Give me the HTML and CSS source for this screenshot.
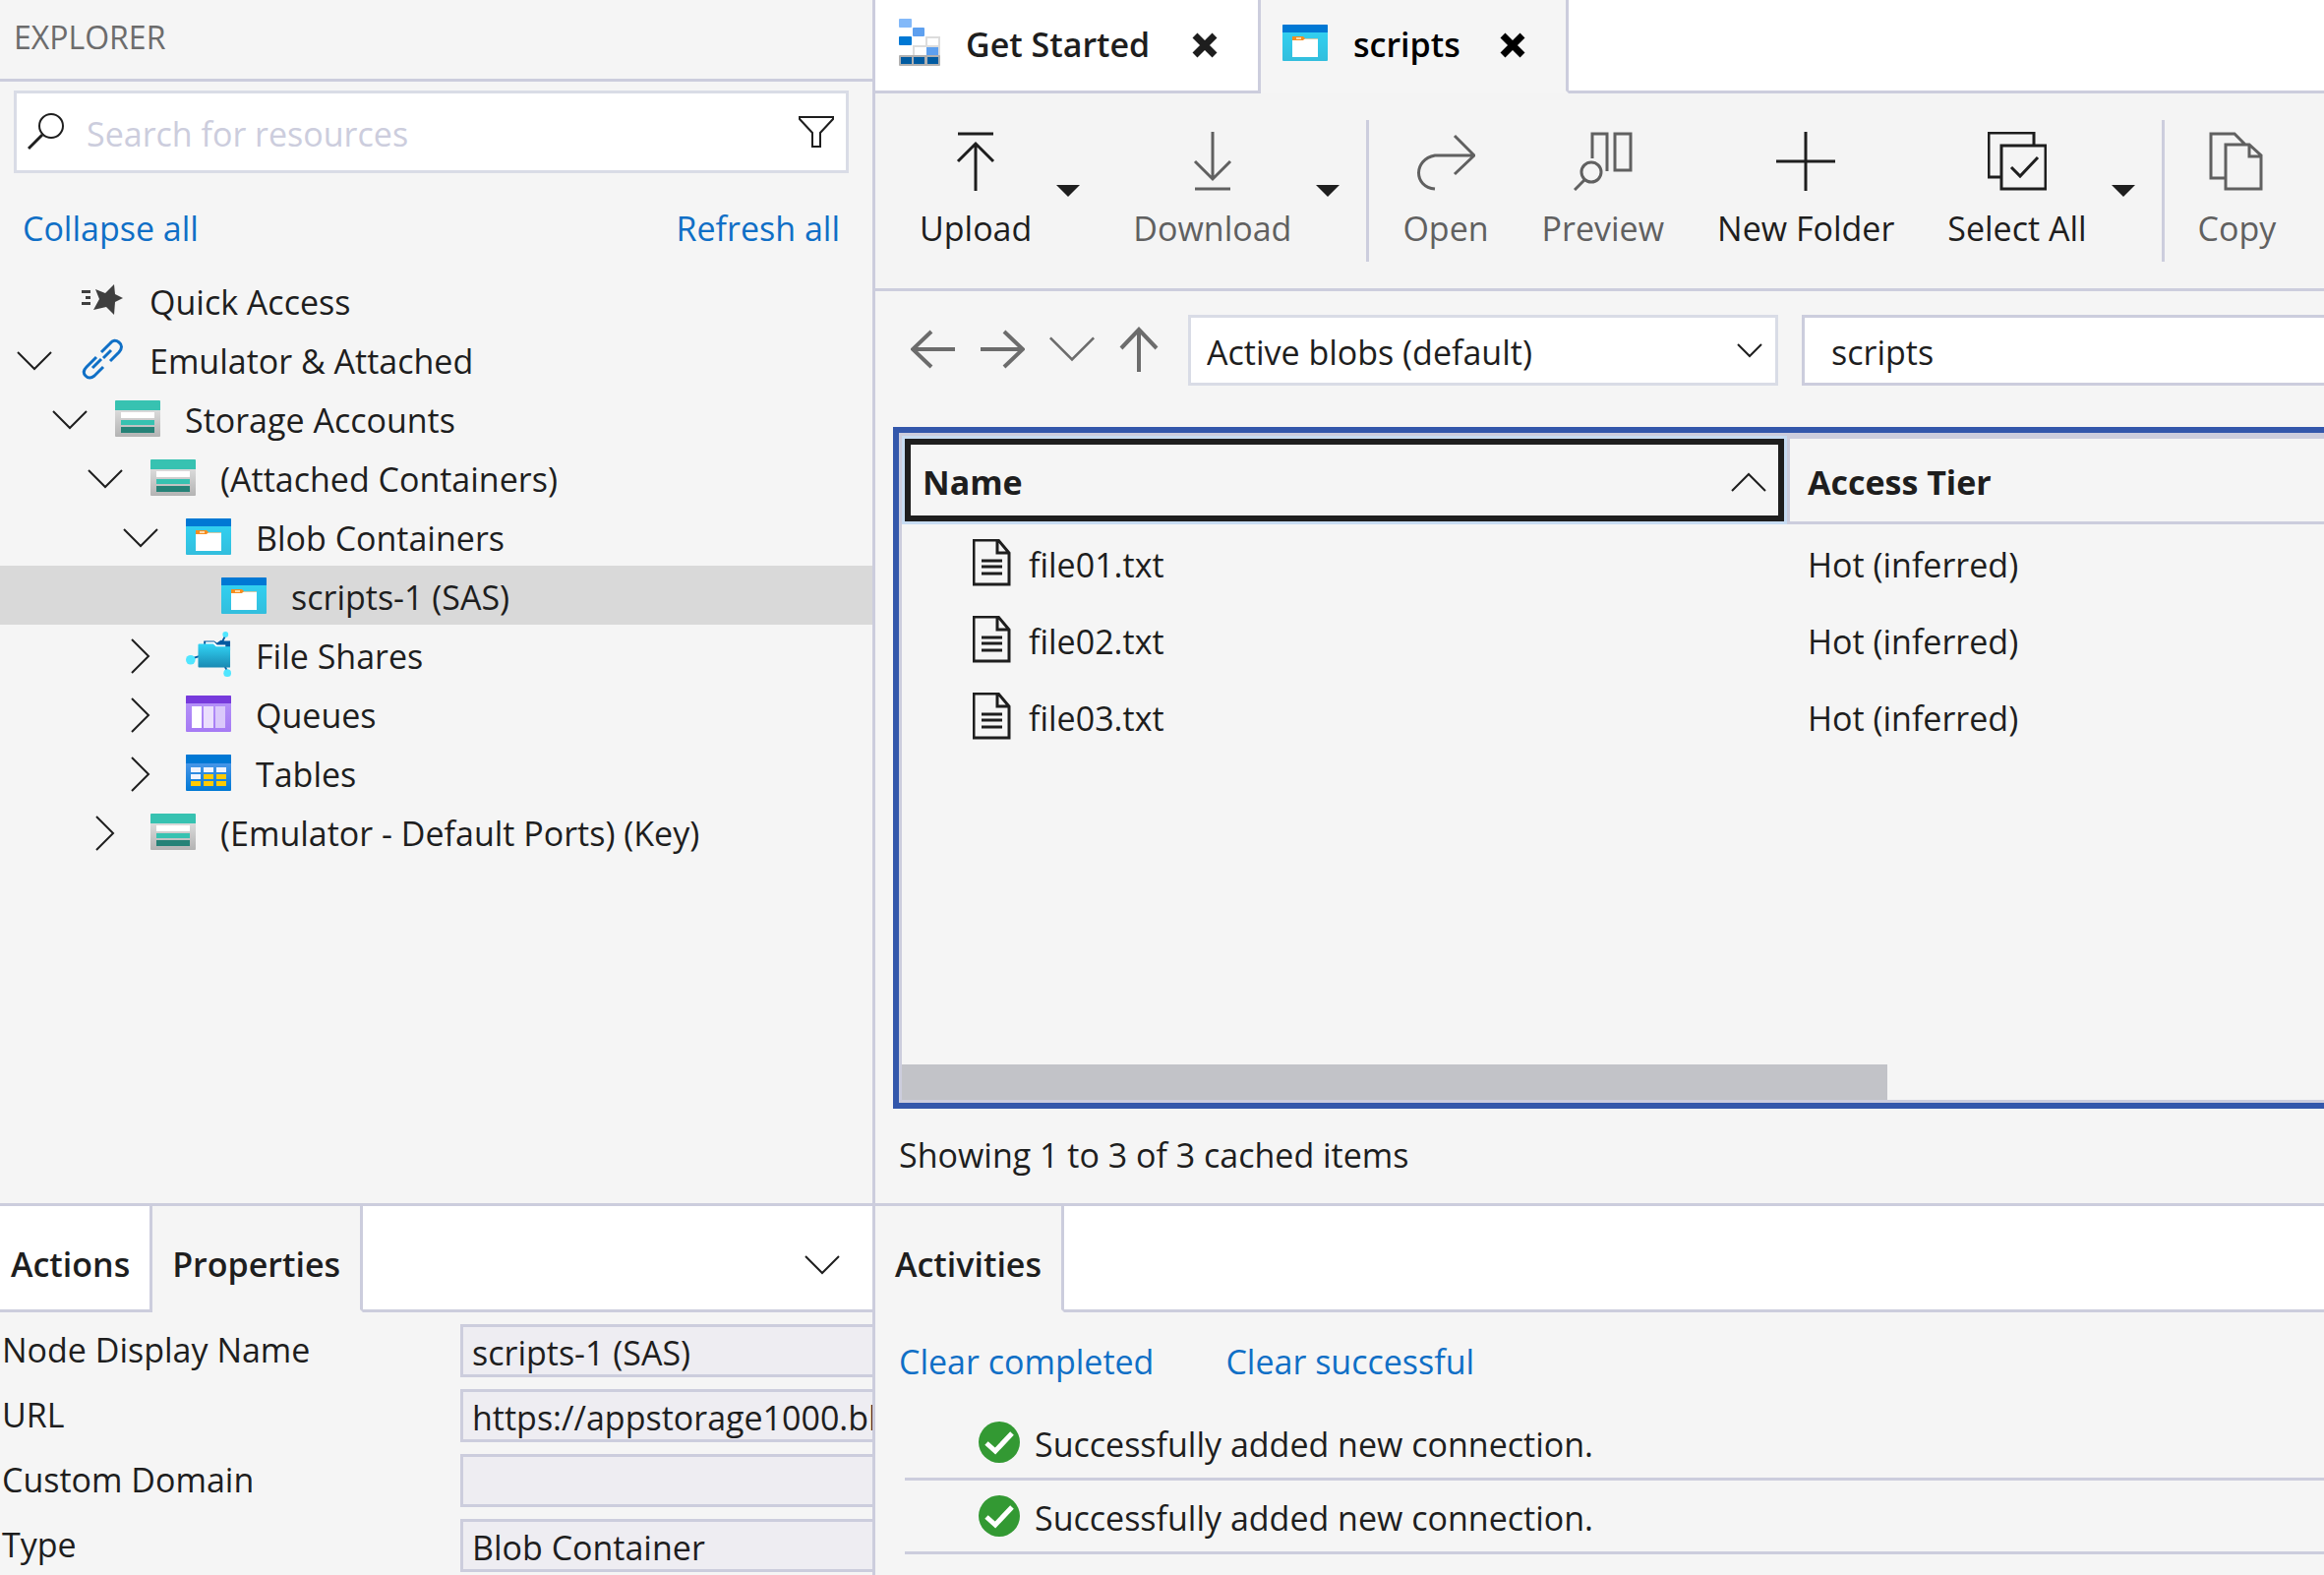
FILE: index.html
```html
<!DOCTYPE html>
<html lang="en">
<head>
  <meta charset="UTF-8" />
  <meta name="viewport" content="width=device-width, initial-scale=1" />
  <title>Storage Explorer</title>
  <link rel="stylesheet" href="styles.css">
</head>
<body>
  <!-- icon definitions -->
  <svg class="defs" width="0" height="0" aria-hidden="true">
    <defs>
      <linearGradient id="gray" x1="0" y1="0" x2="0" y2="1"><stop offset="0" stop-color="#e9e9e9"/><stop offset="1" stop-color="#b3b3b3"/></linearGradient>
      <linearGradient id="cyan" x1="0" y1="0" x2="0" y2="1"><stop offset="0" stop-color="#32d4f5"/><stop offset="1" stop-color="#32bedd"/></linearGradient>
      <linearGradient id="folder" x1="0" y1="0" x2="0" y2="1"><stop offset="0" stop-color="#32d4f5"/><stop offset="1" stop-color="#198ab3"/></linearGradient>
      <linearGradient id="purple" x1="0" y1="0" x2="0" y2="1"><stop offset="0" stop-color="#b796f9"/><stop offset="1" stop-color="#a67af4"/></linearGradient>
      <linearGradient id="blue" x1="0" y1="0" x2="0" y2="1"><stop offset="0" stop-color="#5ea0ef"/><stop offset="1" stop-color="#0078d4"/></linearGradient>
    </defs>
    <symbol id="i-down" viewBox="0 0 36 20"><path d="M1 1l17 17L35 1" fill="none" stroke="currentColor" stroke-width="2"/></symbol>
    <symbol id="i-right" viewBox="0 0 20 36"><path d="M1 1l17 17L1 35" fill="none" stroke="currentColor" stroke-width="2"/></symbol>
    <symbol id="i-storage" viewBox="0 0 46 37">
      <rect width="46" height="37" rx="1" fill="url(#gray)"/>
      <path d="M0 10V1q0-1 1-1h44q1 0 1 1v9z" fill="#37c2b1"/>
      <rect x="6" y="12" width="34" height="6" fill="#fff"/>
      <rect x="6" y="20" width="34" height="5" fill="#37c2b1"/>
      <rect x="6" y="27" width="34" height="6" fill="#258277"/>
    </symbol>
    <symbol id="i-blob" viewBox="0 0 46 37">
      <rect width="46" height="37" rx="1" fill="url(#cyan)"/>
      <path d="M0 8V1q0-1 1-1h44q1 0 1 1v7z" fill="#0078d4"/>
      <path d="M10 14h26v19H10z" fill="#fff"/>
      <path d="M22 14h14v1H22z" fill="#cfc9a8"/>
      <path d="M10 12h11l2 2-2 2H10z" fill="#f78d1e"/>
      <rect x="14" y="13" width="5" height="2" fill="#ffd9a8"/>
    </symbol>
    <symbol id="i-share" viewBox="0 0 48 50">
      <path d="M42 5l-4 8M5 30l10-3M44 44l-4-10" stroke="#005ba1" stroke-width="2"/>
      <path d="M19 11h11l3 2 4-3 4 1h6v10H19z" fill="#005ba1"/>
      <path d="M21 12h9l3 3h9v5H21z" fill="#fff"/>
      <path d="M13 15q0-1 1-1h15l3 3h15v22H14q-1 0-1-1z" fill="url(#folder)"/>
      <circle cx="42" cy="4" r="3" fill="#50e6ff"/><circle cx="5" cy="31" r="5" fill="#50e6ff"/><circle cx="44" cy="45" r="4" fill="#50e6ff"/>
    </symbol>
    <symbol id="i-queue" viewBox="0 0 46 37">
      <rect width="46" height="37" rx="1" fill="url(#purple)"/>
      <path d="M0 8V1q0-1 1-1h44q1 0 1 1v7z" fill="#773adc"/>
      <path d="M6 11h10v22H6z" fill="#fff"/><path d="M18 11h10v22H18z" fill="#ebdffd"/><path d="M30 11h10v22H30z" fill="#dac8fb"/>
    </symbol>
    <symbol id="i-table" viewBox="0 0 46 37">
      <rect width="46" height="37" rx="1" fill="url(#blue)"/>
      <path d="M0 9V1q0-1 1-1h44q1 0 1 1v8z" fill="#0078d4"/>
      <path d="M5 13h10v5H5zM18 13h10v5H18zM31 13h10v5H31zM5 20h10v5H5z" fill="#f0f4fd"/>
      <path d="M18 20h10v5H18zM31 20h10v5H31zM5 27h10v5H5zM18 27h10v5H18zM31 27h10v5H31z" fill="#ffca00"/>
    </symbol>
    <symbol id="i-star" viewBox="0 0 42 32">
      <path d="M0 6h9v3H0zM4 12h5v3H4zM0 18h9v3H0z" fill="#3f3f3f"/>
      <path d="M33 0l1 10 8 4-8 4-1 13-8-8-13 3 6-11-4-10 10 4z" fill="#3f3f3f"/>
    </symbol>
    <symbol id="i-link" viewBox="0 0 42 42">
      <g fill="none" stroke="#0f6fc6" stroke-width="3">
        <path d="M20 14l9-9q4-5 9-1t0 10L29 23"/>
        <path d="M15 19L5 29q-5 5-1 9t9 0l9-9"/>
        <path d="M11 30l9-9M22 20l8-8"/>
      </g>
    </symbol>
    <symbol id="i-start" viewBox="0 0 42 48">
      <rect width="13" height="9" rx="1" fill="#83b9f9"/>
      <rect x="14" y="9" width="12" height="9" rx="1" fill="#5ea0ef"/>
      <rect y="18" width="13" height="9" rx="1" fill="#0078d4"/>
      <path d="M15 18h12v9H15z" fill="#fff"/>
      <path d="M28 19h13v19H15V28h13z" fill="#fff" stroke="#dcdcdc" stroke-width="2"/>
      <path d="M27 28h14" stroke="#dcdcdc" stroke-width="2"/>
      <rect x="28" y="29" width="12" height="8" fill="#5ea0ef"/>
      <rect y="37" width="42" height="11" rx="1" fill="#b0b0b0"/>
      <path d="M2 39h11v7H2zM15 39h11v7H15zM29 39h11v7H29z" fill="#005ba1"/>
    </symbol>
    <symbol id="i-close" viewBox="0 0 26 26"><path d="M3 3l20 20M23 3L3 23" stroke="currentColor" stroke-width="7"/></symbol>
    <symbol id="i-file" viewBox="0 0 39 48">
      <path d="M1 1h25l11 13v32H1z M25 1v13h12" fill="none" stroke="currentColor" stroke-width="3"/>
      <path d="M9 22h21M9 28h21M9 35h21" stroke="currentColor" stroke-width="3"/>
    </symbol>
    <symbol id="i-ok" viewBox="0 0 42 42">
      <circle cx="21" cy="21" r="21" fill="#339933"/>
      <path d="M8 22l9 8L34 12" fill="none" stroke="#fff" stroke-width="5"/>
    </symbol>
    <symbol id="i-back" viewBox="0 0 46 40"><path d="M45 20H2M21 2L2 20l19 18" fill="none" stroke="currentColor" stroke-width="4"/></symbol>
    <symbol id="i-caret" viewBox="0 0 24 12"><path d="M0 0h24L12 12z" fill="currentColor"/></symbol>
  </svg>

  <div class="app">
    <aside class="side">
      <h2 class="side-title">EXPLORER</h2>

      <div class="side-body">
        <div class="search">
          <svg class="search-icon" viewBox="0 0 38 38"><circle cx="24" cy="13" r="12" fill="none" stroke="currentColor" stroke-width="2"/><path d="M15 22L1 36" stroke="currentColor" stroke-width="3"/></svg>
          <input type="text" placeholder="Search for resources" aria-label="Search for resources" />
          <button class="icon-btn" aria-label="Filter"><svg width="36" height="33" viewBox="0 0 36 33"><path d="M1 1h34v2L22 17v14h-8V17L1 3z" fill="none" stroke="currentColor" stroke-width="2"/></svg></button>
        </div>
        <div class="side-links">
          <a href="#">Collapse all</a>
          <a href="#">Refresh all</a>
        </div>

        <ul class="tree">
          <li class="node l0"><span class="arrow"></span><svg class="ico quick"><use href="#i-star"/></svg><span>Quick Access</span></li>
          <li class="node l0"><span class="arrow"><svg class="down"><use href="#i-down"/></svg></span><svg class="ico link"><use href="#i-link"/></svg><span>Emulator &amp; Attached</span></li>
          <li class="node l1"><span class="arrow"><svg class="down"><use href="#i-down"/></svg></span><svg class="ico"><use href="#i-storage"/></svg><span>Storage Accounts</span></li>
          <li class="node l2"><span class="arrow"><svg class="down"><use href="#i-down"/></svg></span><svg class="ico"><use href="#i-storage"/></svg><span>(Attached Containers)</span></li>
          <li class="node l3"><span class="arrow"><svg class="down"><use href="#i-down"/></svg></span><svg class="ico"><use href="#i-blob"/></svg><span>Blob Containers</span></li>
          <li class="node l4 selected"><span class="arrow"></span><svg class="ico"><use href="#i-blob"/></svg><span>scripts-1 (SAS)</span></li>
          <li class="node l3"><span class="arrow"><svg class="right"><use href="#i-right"/></svg></span><svg class="ico share"><use href="#i-share"/></svg><span>File Shares</span></li>
          <li class="node l3"><span class="arrow"><svg class="right"><use href="#i-right"/></svg></span><svg class="ico"><use href="#i-queue"/></svg><span>Queues</span></li>
          <li class="node l3"><span class="arrow"><svg class="right"><use href="#i-right"/></svg></span><svg class="ico"><use href="#i-table"/></svg><span>Tables</span></li>
          <li class="node l2"><span class="arrow"><svg class="right"><use href="#i-right"/></svg></span><svg class="ico"><use href="#i-storage"/></svg><span>(Emulator - Default Ports) (Key)</span></li>
        </ul>
      </div>

      <section class="bottom">
        <div class="tabs">
          <button class="tab first">Actions</button>
          <button class="tab active">Properties</button>
          <div class="tab-fill"><button class="icon-btn" aria-label="Collapse panel"><svg class="down"><use href="#i-down"/></svg></button></div>
        </div>
        <div class="props">
          <label for="p-name">Node Display Name</label><input id="p-name" type="text" value="scripts-1 (SAS)" readonly />
          <label for="p-url">URL</label><input id="p-url" type="text" value="https://appstorage1000.blob" readonly />
          <label for="p-domain">Custom Domain</label><input id="p-domain" type="text" value="" readonly />
          <label for="p-type">Type</label><input id="p-type" type="text" value="Blob Container" readonly />
        </div>
      </section>
    </aside>

    <main class="main">
      <div class="tabs editor-tabs">
        <div class="tab start"><svg width="42" height="48"><use href="#i-start"/></svg><span>Get Started</span><button class="icon-btn" aria-label="Close Get Started"><svg width="26" height="26"><use href="#i-close"/></svg></button></div>
        <div class="tab active file"><svg width="46" height="37"><use href="#i-blob"/></svg><span>scripts</span><button class="icon-btn" aria-label="Close scripts"><svg width="26" height="26"><use href="#i-close"/></svg></button></div>
        <div class="tab-fill"></div>
      </div>

      <div class="toolbar">
        <button class="tool split"><svg viewBox="0 0 60 60"><path d="M12 2h36M30 60V12M12 30l18-18 18 18" fill="none" stroke="currentColor" stroke-width="3"/></svg>Upload</button>
        <button class="more" aria-label="More upload options"><svg><use href="#i-caret"/></svg></button>
        <button class="tool split dim"><svg viewBox="0 0 60 60"><path d="M12 58h36M30 0v48M12 30l18 18 18-18" fill="none" stroke="currentColor" stroke-width="3"/></svg>Download</button>
        <button class="more" aria-label="More download options"><svg><use href="#i-caret"/></svg></button>
        <span class="sep"></span>
        <button class="tool dim"><svg viewBox="0 0 60 60"><path d="M39 4l20 20-20 19M59 24H19C-3 28-3 56 19 58" fill="none" stroke="currentColor" stroke-width="3"/></svg>Open</button>
        <button class="tool dim"><svg viewBox="0 0 60 60"><path d="M19 27V2h15v38M42 2h16v37H42z" fill="none" stroke="currentColor" stroke-width="3"/><circle cx="18" cy="41" r="10" fill="none" stroke="currentColor" stroke-width="3"/><path d="M11 49L1 59" stroke="currentColor" stroke-width="3"/></svg>Preview</button>
        <button class="tool"><svg viewBox="0 0 60 60"><path d="M0 30h60M30 0v60" stroke="currentColor" stroke-width="3"/></svg>New Folder</button>
        <button class="tool split"><svg viewBox="0 0 60 60"><path d="M14 46H1V1h46v13M14 14h45v44H14zM24 36l9 9 18-19" fill="none" stroke="currentColor" stroke-width="3"/></svg>Select All</button>
        <button class="more" aria-label="More select options"><svg><use href="#i-caret"/></svg></button>
        <span class="sep"></span>
        <button class="tool dim"><svg viewBox="0 0 60 60"><path d="M19 47H4V2h24l11 11M19 13h24l12 11v34H19zM43 13v12h12" fill="none" stroke="currentColor" stroke-width="3"/></svg>Copy</button>
      </div>

      <div class="content">
        <div class="nav">
          <button class="icon-btn" aria-label="Back"><svg width="46" height="40"><use href="#i-back"/></svg></button>
          <button class="icon-btn" aria-label="Forward"><svg class="flip" width="46" height="40"><use href="#i-back"/></svg></button>
          <button class="icon-btn" aria-label="History"><svg width="48" height="26"><use href="#i-down"/></svg></button>
          <button class="icon-btn" aria-label="Up"><svg width="40" height="46" viewBox="0 0 40 46"><path d="M20 46V2M2 22L20 3l18 19" fill="none" stroke="currentColor" stroke-width="4"/></svg></button>
          <div class="picker">
            <select aria-label="Blob view"><option>Active blobs (default)</option></select>
            <svg width="26" height="15" viewBox="0 0 26 15"><path d="M1 1l12 12L25 1" fill="none" stroke="currentColor" stroke-width="2"/></svg>
          </div>
          <input class="path" type="text" value="scripts" aria-label="Path" />
        </div>

        <div class="grid">
          <table>
            <thead>
              <tr>
                <th class="col-name"><button>Name<svg width="36" height="20" viewBox="0 0 36 20"><path d="M1 19L18 2l17 17" fill="none" stroke="currentColor" stroke-width="2"/></svg></button></th>
                <th class="col-tier">Access Tier</th>
              </tr>
            </thead>
            <tbody>
              <tr><td class="name"><svg><use href="#i-file"/></svg><span>file01.txt</span></td><td>Hot (inferred)</td></tr>
              <tr><td class="name"><svg><use href="#i-file"/></svg><span>file02.txt</span></td><td>Hot (inferred)</td></tr>
              <tr><td class="name"><svg><use href="#i-file"/></svg><span>file03.txt</span></td><td>Hot (inferred)</td></tr>
            </tbody>
          </table>
          <div class="scroll"></div>
        </div>
        <p class="status">Showing 1 to 3 of 3 cached items</p>
      </div>

      <section class="bottom">
        <div class="tabs">
          <button class="tab active">Activities</button>
          <div class="tab-fill"></div>
        </div>
        <div class="act-links">
          <a href="#">Clear completed</a>
          <a href="#">Clear successful</a>
        </div>
        <ul class="acts">
          <li><svg><use href="#i-ok"/></svg><span>Successfully added new connection.</span></li>
          <li><svg><use href="#i-ok"/></svg><span>Successfully added new connection.</span></li>
        </ul>
      </section>
    </main>
  </div>
</body>
</html>
```

FILE: styles.css
```css
* {
  box-sizing: border-box;
}
body {
  margin: 0;
  font-family: "Open Sans", "Noto Sans", sans-serif;
  font-size: 34px;
  line-height: 46px;
  color: #1e1e1e;
  background: #f5f5f5;
}
input, button, select {
  font: inherit;
  color: inherit;
  border-radius: 0;
  outline: none;
}
button {
  border: none;
  background: none;
  padding: 0;
  cursor: pointer;
}
a {
  color: #0f6fc6;
  text-decoration: none;
}
ul {
  list-style: none;
  margin: 0;
  padding: 0;
}
svg {
  display: block;
  flex: none;
}
.defs {
  position: absolute;
}
.app {
  display: flex;
  height: 100vh;
  overflow: hidden;
  white-space: nowrap;
}

/* left side */
.side {
  flex: none;
  width: 890px;
  border-right: 3px solid #cccddd;
  display: flex;
  flex-direction: column;
  overflow: hidden;
}
.side-title {
  margin: 0;
  padding: 15px 14px 19px;
  border-bottom: 3px solid #cccddd;
  font-size: 32px;
  font-weight: normal;
  color: #6c6c6c;
}
.side-body {
  flex: 1;
}
.search {
  display: flex;
  align-items: center;
  height: 84px;
  margin: 9px 24px 0 14px;
  padding: 0 12px 0 11px;
  border: 3px solid #d9dce6;
  background: #fff;
}
.search-icon {
  width: 38px;
  height: 38px;
}
.search input {
  flex: 1;
  min-width: 0;
  border: none;
  padding: 3px 0 0;
  margin-left: 22px;
  background: none;
}
.search input::placeholder {
  color: #cccddd;
  opacity: 1;
}
.side-links {
  display: flex;
  justify-content: space-between;
  padding: 33px 33px 20px 23px;
}
.icon-btn {
  display: flex;
  align-items: center;
}
.node {
  display: flex;
  align-items: center;
  height: 60px;
}
.node span:last-child {
  padding: 3px 0 0 25px;
}
.l1 { padding-left: 36px; }
.l2 { padding-left: 72px; }
.l3 { padding-left: 108px; }
.l4 { padding-left: 144px; }
.selected {
  background: #d9d9d9;
}
.arrow {
  display: flex;
  justify-content: center;
  width: 70px;
  margin-right: 11px;
  padding-top: 4px;
}
.down {
  width: 36px;
  height: 20px;
}
.right {
  width: 20px;
  height: 36px;
}
.ico {
  width: 46px;
  height: 37px;
}
.ico.quick {
  height: 32px;
}
.ico.link {
  height: 42px;
}
.ico.share {
  height: 50px;
}

/* tabs */
.bottom {
  flex: none;
  height: 378px;
  border-top: 3px solid #cccddd;
}
.tabs {
  display: flex;
  height: 108px;
}
.tab {
  display: flex;
  align-items: center;
  padding: 0 20px;
  border-right: 3px solid #cccddd;
  border-bottom: 3px solid #cccddd;
  background: #fff;
  font-weight: 600;
}
.bottom .tab {
  padding-top: 12px;
}
.tab.first {
  padding-left: 11px;
}
.tab.active {
  background: #f5f5f5;
  border-bottom-color: #f5f5f5;
}
.tab-fill {
  flex: 1;
  display: flex;
  justify-content: flex-end;
  padding: 14px 33px 0 0;
  border-bottom: 3px solid #cccddd;
  background: #fff;
}
.editor-tabs {
  flex: none;
  height: 95px;
}
.editor-tabs .tab {
  padding: 0 41px 6px 24px;
}
.editor-tabs .icon-btn {
  margin-left: auto;
  padding-top: 6px;
}
.editor-tabs span {
  padding-top: 3px;
  margin-left: 26px;
}
.start {
  width: 392px;
}
.file {
  width: 313px;
}
.editor-tabs .file {
  padding-left: 22px;
  color: #000;
}

/* properties */
.props {
  display: grid;
  grid-template-columns: 466px 1fr;
  row-gap: 12px;
  padding: 12px 0 0 2px;
}
.props label {
  padding-top: 3px;
}
.props input {
  height: 54px;
  min-width: 0;
  width: 100%;
  padding: 3px 0 0 9px;
  border: 3px solid #cccddd;
  border-right: none;
  background: #eeedf2;
}

/* right side */
.main {
  flex: 1;
  min-width: 0;
  display: flex;
  flex-direction: column;
}
.toolbar {
  flex: none;
  display: flex;
  height: 201px;
  padding: 27px 0 27px 18px;
  border-bottom: 3px solid #cccddd;
  overflow: hidden;
  background: #f4f4f4;
}
.tool {
  flex: none;
  display: flex;
  flex-direction: column;
  align-items: center;
  gap: 15px;
  padding: 12px 27px 0;
}
.tool.split {
  padding-right: 25px;
}
.tool svg {
  width: 60px;
  height: 60px;
}
.dim {
  color: #606060;
}
.more {
  flex: none;
  width: 51px;
}
.more svg {
  width: 24px;
  height: 12px;
}
.sep {
  flex: none;
  width: 3px;
  margin-right: 7px;
  background: #cccddd;
}
.content {
  flex: 1;
  min-height: 0;
  display: flex;
  flex-direction: column;
  padding: 24px 0 0 18px;
}
.nav {
  display: flex;
  align-items: center;
  gap: 24px;
  height: 72px;
  padding-left: 18px;
}
.nav .icon-btn {
  color: #6c6c6c;
  padding-bottom: 2px;
}
.flip {
  transform: scaleX(-1);
}
.picker {
  flex: none;
  display: grid;
  align-items: center;
  width: 600px;
  height: 72px;
  margin-left: 6px;
}
.picker select {
  grid-area: 1 / 1;
  height: 72px;
  padding: 3px 60px 0 16px;
  border: 3px solid #d9dce6;
  background: #fff;
  appearance: none;
}
.picker svg {
  grid-area: 1 / 1;
  justify-self: end;
  margin-right: 16px;
}
.path {
  flex: 1;
  min-width: 0;
  height: 72px;
  padding: 3px 0 0 27px;
  border: 3px solid #cccddd;
  border-right: none;
  background: #fff;
}
.grid {
  flex: 1;
  display: flex;
  flex-direction: column;
  justify-content: space-between;
  margin-top: 42px;
  border: 6px solid #3357ab;
  border-right: none;
  box-shadow: inset 3px 3px #cccddd, inset 0 -3px #cccddd;
  padding: 3px 0 3px 3px;
}
table {
  width: 100%;
  border-spacing: 0;
  table-layout: fixed;
}
th {
  height: 90px;
  padding: 0;
  text-align: left;
  font-weight: 700;
}
.col-name {
  width: 900px;
  border: 3px solid #c7dcf2;
}
.col-name button {
  display: flex;
  align-items: center;
  justify-content: space-between;
  width: 100%;
  height: 84px;
  padding: 3px 12px 0;
  border: 6px solid #1e1e1e;
}
.col-tier {
  border: 3px solid #cccddd;
  border-right: none;
  padding: 3px 0 0 18px;
}
td {
  height: 78px;
  padding: 3px 0 0 21px;
}
td.name {
  display: flex;
  align-items: center;
  gap: 18px;
  padding: 0 0 0 72px;
}
.name span, .acts span {
  padding-top: 3px;
}
.name svg {
  width: 39px;
  height: 48px;
}
.scroll {
  width: 69.3%;
  height: 36px;
  background: #c2c3c8;
}
.status {
  margin: 0;
  padding: 24px 0 26px 6px;
}

/* activities */
.act-links {
  display: flex;
  gap: 73px;
  padding: 27px 0 0 24px;
}
.acts {
  padding: 23px 0 0 30px;
}
.acts li {
  display: flex;
  align-items: center;
  gap: 15px;
  height: 75px;
  padding-left: 75px;
  border-bottom: 3px solid #cccddd;
}
.acts svg {
  width: 42px;
  height: 42px;
}
```
